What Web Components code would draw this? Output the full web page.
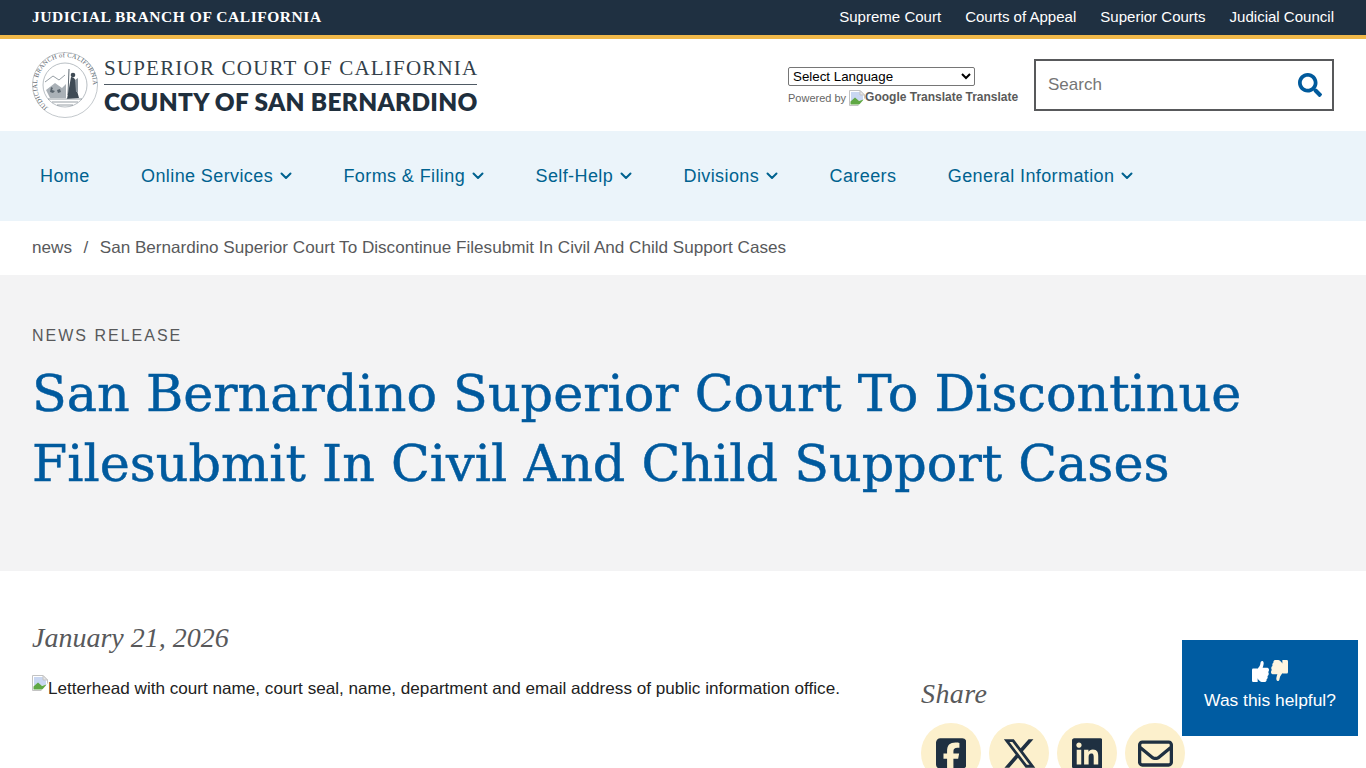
<!doctype html>
<html lang="en">
<head>
<meta charset="utf-8">
<title>San Bernardino Superior Court To Discontinue Filesubmit In Civil And Child Support Cases</title>
<style>
    body {
        margin: 0;
        font-family: "Liberation Sans", Arial, sans-serif;
        color: #212121;
        background: #fff;
    }
</style>
</head>
<body>
<court-topbar></court-topbar>
<court-header></court-header>
<court-nav>
    <nav-item>Home</nav-item>
    <nav-item menu>Online Services</nav-item>
    <nav-item menu>Forms &amp; Filing</nav-item>
    <nav-item menu>Self-Help</nav-item>
    <nav-item menu>Divisions</nav-item>
    <nav-item>Careers</nav-item>
    <nav-item menu>General Information</nav-item>
</court-nav>
<court-breadcrumb></court-breadcrumb>
<news-hero>San Bernardino Superior Court To Discontinue Filesubmit In Civil And Child Support Cases</news-hero>
<news-body>
    <broken-image>Letterhead with court name, court seal, name, department and email address of public information office.</broken-image>
</news-body>
<feedback-tab></feedback-tab>

<script>
    // every element gets its markup from one string, cloned into an open shadow root
    function component(name, html) {
        const template = document.createElement('template');
        template.innerHTML = html;
        customElements.define(name, class extends HTMLElement {
            constructor() {
                super();
                this.attachShadow({ mode: 'open' });
                this.shadowRoot.appendChild(template.content.cloneNode(true));
            }
        });
    }

    const brokenIcon = `
        <svg width="16" height="16" viewBox="0 0 16 16" aria-hidden="true" style="flex:none">
            <path d="M0.5 0.5H11L15.5 5V15.5H0.5Z" fill="#fff" stroke="#c3c3c3"/>
            <path d="M2 2H10.500L14 5.500V10L2 12Z" fill="#c9d7f1"/>
            <path d="M1.500 14.500V11.500L6 7.500L10 11L14.500 9.500V14.500Z" fill="#5fa844"/>
            <path d="M11 0.500V5H15.500Z" fill="#e8e8e8" stroke="#c3c3c3"/>
            <path d="M9 16L16 8V16Z" fill="#fff"/>
        </svg>`;

    const thumb = 'M313.400 32.900c26 5.200 42.900 30.500 37.700 56.500l-2.300 11.400c-5.300 26.700-15.100 52.100-28.800 75.200H464c26.500 0 48 21.500 48 48c0 18.500-10.500 34.600-25.900 42.600C497 275.400 504 288.900 504 304c0 23.400-16.800 42.900-38.900 47.100c4.400 7.300 6.900 15.800 6.900 24.900c0 21.300-13.900 39.400-33.100 45.600c.7 3.300 1.100 6.800 1.100 10.400c0 26.500-21.500 48-48 48H294.500c-19 0-37.500-5.600-53.300-16.100l-38.500-25.700C176 420.400 160 390.400 160 358.300V320 272 247.100c0-29.200 13.300-56.700 36-75l7.400-5.900c26.500-21.200 44.600-51 51.200-84.200l2.300-11.400c5.200-26 30.500-42.900 56.500-37.700zM32 192H170V480H32c-17.700 0-32-14.300-32-32V224c0-17.700 14.300-32 32-32z';

    component('court-topbar', `
        <style>
            :host {
                display: flex;
                justify-content: space-between;
                align-items: center;
                height: 35px;
                padding: 0 32px;
                background: #1f3041;
                border-bottom: 4px solid #f0b849;
                color: #fff;
            }
            .brand {
                font: bold 15.5px "Liberation Serif", serif;
                letter-spacing: 0.55px;
                margin-top: -2px;
            }
            nav {
                display: flex;
                gap: 24px;
                font-size: 15.040px;
                margin-top: -2px;
            }
        </style>
        <span class="brand">JUDICIAL BRANCH OF CALIFORNIA</span>
        <nav>
            <span>Supreme Court</span>
            <span>Courts of Appeal</span>
            <span>Superior Courts</span>
            <span>Judicial Council</span>
        </nav>
    `);

    component('court-seal', `
        <style>
            :host { display: block; width: 66px; height: 66px; }
            text { font: 6.6px "Liberation Serif", serif; fill: #58636d; letter-spacing: .2px; }
        </style>
        <svg width="66" height="66" viewBox="0 0 66 66" aria-hidden="true">
            <defs><path id="ring" d="M17 56A28 28 0 1 1 50 55.500"/></defs>
            <circle cx="33" cy="33" r="32.500" fill="#fff" stroke="#9aa2a9" stroke-width=".6"/>
            <circle cx="33" cy="33" r="22" fill="#fff" stroke="#8a949c" stroke-width=".6"/>
            <text><textPath href="#ring" startOffset="1">JUDICIAL BRANCH of CALIFORNIA</textPath></text>
            <path d="M13 30L21 24L27 28L33 23" fill="none" stroke="#7b858d" stroke-width=".8"/>
            <path d="M14 38L23 31L30 36L34 32V46H18Z" fill="#aab1b7"/>
            <path d="M19 35l2 1l-1 2l3 1l-2 2l-3-1ZM25 38l3-1l1 3l-3 1Z" fill="#59646d"/>
            <path d="M37 17L36 43" stroke="#4c5862" stroke-width=".9"/>
            <path d="M39 25C43 25 45 30 44 35L47 46L35 47L37 36Z" fill="#3f4b55"/>
            <circle cx="41" cy="23" r="2.300" fill="#3f4b55"/>
            <path d="M43 28L46 26V40L44 40Z" fill="#8a949c"/>
            <path d="M16 47H50M20 50H46M25 53H41" stroke="#7b858d" stroke-width=".8"/>
        </svg>
    `);

    component('court-logo', `
        <style>
            :host {
                display: flex;
                align-items: center;
                gap: 6px;
                color: #1f2f3d;
            }
            .names { display: flex; flex-direction: column; width: 373px; margin-top: 3px; }
            .top {
                font: 21px/1 "Liberation Serif", serif;
                letter-spacing: 1.2px;
                white-space: nowrap;
                padding-bottom: 5px;
                border-bottom: 1px solid #4f5a64;
                margin-bottom: 4px;
                color: #333f4a;
            }
            .bottom {
                font: 800 24.4px/1.1 Lato, sans-serif;
                letter-spacing: .33px;
                white-space: nowrap;
            }
        </style>
        <court-seal></court-seal>
        <div class="names">
            <span class="top">SUPERIOR COURT OF CALIFORNIA</span>
            <span class="bottom">COUNTY OF SAN BERNARDINO</span>
        </div>
    `);

    component('translate-box', `
        <style>
            :host { display: block; width: 230px; color: #666; font-size: 11px; margin-top: 3px; }
            select {
                display: block;
                width: 187px;
                height: 19px;
                padding: 0;
                font: 13.33px "Liberation Sans", sans-serif;
                color: #000;
                background: #fff;
                border: 1px solid #767676;
                border-radius: 2px;
                margin-bottom: 2px;
            }
            .powered { display: flex; align-items: flex-start; white-space: nowrap; height: 18px; padding-top: 2px; box-sizing: border-box; }
            .powered span { line-height: 13px; }
            .powered .by { margin-top: 2px; }
            .powered .name { margin-top: 1px; }
            .powered svg { margin: 0 0 0 3px; }
            b { font-size: 12px; font-weight: bold; color: #5a5a5a; }
        </style>
        <select><option>Select Language</option></select>
        <div class="powered">
            <span class="by">Powered by</span>${brokenIcon}<span class="name"><b>Google Translate</b> <b>Translate</b></span>
        </div>
    `);

    component('site-search', `
        <style>
            :host {
                display: flex;
                align-items: center;
                justify-content: space-between;
                box-sizing: border-box;
                width: 300px;
                height: 52px;
                padding: 0 10px 0 12px;
                border: 2px solid #58595b;
                color: #757575;
                font-size: 17px;
            }
            svg { fill: #005a9c; display: block; }
        </style>
        <span>Search</span>
        <svg width="24" height="24" viewBox="0 0 512 512" aria-hidden="true"><path d="M505 442.700L405.300 343c-4.500-4.500-10.600-7-17-7H372c27.600-35.300 44-79.700 44-128C416 93.100 322.900 0 208 0S0 93.100 0 208s93.100 208 208 208c48.300 0 92.700-16.400 128-44v16.300c0 6.400 2.500 12.500 7 17l99.700 99.700c9.400 9.400 24.600 9.400 33.900 0l28.300-28.300c9.400-9.400 9.400-24.600.1-34zM208 336c-70.700 0-128-57.200-128-128 0-70.700 57.200-128 128-128 70.700 0 128 57.200 128 128 0 70.700-57.200 128-128 128z"/></svg>
    `);

    component('court-header', `
        <style>
            :host {
                display: flex;
                align-items: center;
                height: 92px;
                padding: 0 32px;
                background: #fff;
            }
            court-logo { margin-right: auto; }
            translate-box { margin-right: 16px; }
        </style>
        <court-logo></court-logo>
        <translate-box></translate-box>
        <site-search></site-search>
    `);

    component('court-nav', `
        <style>
            :host {
                display: flex;
                align-items: center;
                gap: 51.400px;
                height: 90px;
                padding: 0 40px;
                background: #ebf4fa;
            }
        </style>
        <slot></slot>
    `);

    component('nav-item', `
        <style>
            :host {
                display: inline-flex;
                align-items: center;
                color: #00628f;
                font-size: 18px;
                letter-spacing: .4px;
                white-space: nowrap;
            }
            svg { display: none; margin-left: 7px; }
            :host([menu]) svg { display: block; }
        </style>
        <slot></slot>
        <svg width="12" height="8" viewBox="0 0 12 8" aria-hidden="true"><path d="M1.500 1.500L6 6L10.500 1.500" fill="none" stroke="currentColor" stroke-width="2" stroke-linecap="round" stroke-linejoin="round"/></svg>
    `);

    component('court-breadcrumb', `
        <style>
            :host {
                display: flex;
                align-items: center;
                height: 54px;
                padding: 0 32px;
                color: #58595b;
                font-size: 17.120px;
                white-space: nowrap;
            }
            i { font-style: normal; margin: 0 11.500px; }
        </style>
        <span>news</span><i>/</i><span>San Bernardino Superior Court To Discontinue Filesubmit In Civil And Child Support Cases</span>
    `);

    component('news-hero', `
        <style>
            :host {
                display: block;
                height: 296px;
                box-sizing: border-box;
                padding: 51px 32px 0;
                background: #f3f3f4;
            }
            .kicker {
                color: #58595b;
                font-size: 16px;
                line-height: 20px;
                letter-spacing: 2px;
            }
            h1 {
                margin: 13px 0 0;
                width: 1260px;
                color: #005a9e;
                font: 400 50.800px/70px "DejaVu Serif", serif;
                -webkit-text-stroke: .5px #005a9e;
            }
        </style>
        <div class="kicker">NEWS RELEASE</div>
        <h1><slot></slot></h1>
    `);

    component('broken-image', `
        <style>
            :host { display: flex; align-items: flex-start; font-size: 17.120px; line-height: 28px; white-space: nowrap; color: #212121; }
        </style>
        ${brokenIcon}<slot></slot>
    `);

    component('share-links', `
        <style>
            :host { display: block; }
            h2 {
                margin: 0 0 11px;
                color: #58595b;
                font: italic 400 28px/36px "Liberation Serif", serif;
                letter-spacing: .4px;
            }
            ul { display: flex; gap: 8px; margin: 0; padding: 0; list-style: none; }
            li {
                display: flex;
                align-items: center;
                justify-content: center;
                width: 60px;
                height: 60px;
                border-radius: 50%;
                background: #fcf0cc;
            }
            svg { display: block; fill: #1f3041; }
        </style>
        <h2>Share</h2>
        <ul>
            <li><svg width="30.600" height="35" viewBox="0 0 448 512" aria-hidden="true"><path d="M64 32C28.700 32 0 60.700 0 96V416c0 35.300 28.700 64 64 64h98.200V334.200H109.400V256h52.800V222.300c0-87.100 39.400-127.500 125-127.500c16.200 0 44.200 3.200 55.700 6.400V172c-6-.6-16.500-1-29.600-1c-42 0-58.200 15.900-58.200 57.200V256h83.600l-14.400 78.200H255V480H384c35.300 0 64-28.700 64-64V96c0-35.300-28.700-64-64-64H64z"/></svg></li>
            <li><svg width="35" height="35" viewBox="0 0 512 512" aria-hidden="true"><path d="M389.200 48h70.600L305.600 224.200 487 464H345L233.700 318.600 106.500 464H35.800L200.700 275.500 26.800 48H172.400L272.900 180.900 389.200 48zM364.400 421.800h39.100L151.100 88h-42L364.400 421.800z"/></svg></li>
            <li><svg width="30.600" height="35" viewBox="0 0 448 512" aria-hidden="true"><path d="M416 32H31.900C14.300 32 0 46.500 0 64.300v383.400C0 465.500 14.300 480 31.900 480H416c17.600 0 32-14.500 32-32.300V64.300c0-17.800-14.400-32.300-32-32.300zM135.400 416H69V202.200h66.500V416zm-33.200-243c-21.300 0-38.500-17.300-38.500-38.500S80.900 96 102.200 96c21.200 0 38.500 17.300 38.500 38.500 0 21.300-17.200 38.500-38.500 38.500zm282.100 243h-66.400V312c0-24.800-.5-56.700-34.500-56.700-34.600 0-39.900 27-39.900 54.900V416h-66.400V202.200h63.700v29.200h.9c8.900-16.800 30.600-34.500 62.900-34.500 67.200 0 79.700 44.300 79.700 101.900V416z"/></svg></li>
            <li><svg width="35" height="35" viewBox="0 0 512 512" aria-hidden="true"><path d="M64 112c-8.800 0-16 7.200-16 16v22.100L220.500 291.700c20.700 17 50.400 17 71.100 0L464 150.100V128c0-8.800-7.200-16-16-16H64zM48 212.200V384c0 8.800 7.200 16 16 16H448c8.800 0 16-7.200 16-16V212.200L322 328.800c-38.400 31.500-93.700 31.500-132 0L48 212.200zM0 128C0 92.700 28.700 64 64 64H448c35.300 0 64 28.700 64 64V384c0 35.300-28.700 64-64 64H64c-35.300 0-64-28.700-64-64V128z"/></svg></li>
        </ul>
    `);

    component('news-body', `
        <style>
            :host { display: block; padding: 51px 32px 40px; }
            .date {
                color: #58595b;
                font: italic 400 28px/32px "Liberation Serif", serif;
                margin-bottom: 21px;
            }
            .columns { display: grid; grid-template-columns: 889px 1fr; }
            share-links { margin-top: 1px; }
        </style>
        <div class="date">January 21, 2026</div>
        <div class="columns">
            <div><slot></slot></div>
            <share-links></share-links>
        </div>
    `);

    component('feedback-tab', `
        <style>
            :host {
                position: fixed;
                right: 8px;
                bottom: 32px;
                display: flex;
                flex-direction: column;
                align-items: center;
                box-sizing: border-box;
                padding-top: 21px;
                gap: 8px;
                width: 176px;
                height: 96px;
                background: #005ca2;
                color: #fff;
                font-size: 17.400px;
                line-height: 20px;
            }
            .thumbs { display: flex; gap: 2px; }
            svg { display: block; fill: #fff; }
            .down { fill: #fdf6e0; transform: rotate(180deg); margin-top: -1px; }
        </style>
        <div class="thumbs">
            <svg width="17" height="21" viewBox="0 32 512 448" preserveAspectRatio="none" aria-hidden="true"><path d="${thumb}"/></svg>
            <svg class="down" width="17" height="21" viewBox="0 32 512 448" preserveAspectRatio="none" aria-hidden="true"><path d="${thumb}"/></svg>
        </div>
        <span>Was this helpful?</span>
    `);
</script>
</body>
</html>
